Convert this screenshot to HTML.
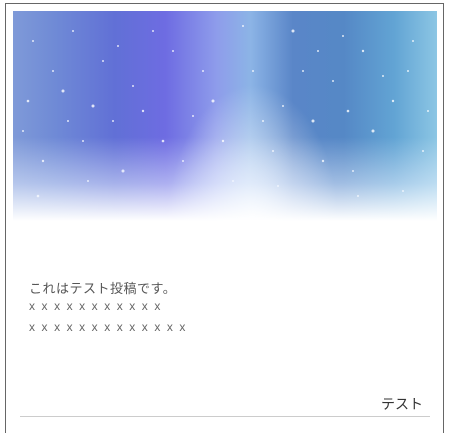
<!DOCTYPE html>
<html><head><meta charset="utf-8"><style>
body{margin:0;width:450px;height:426px;background:#fff;overflow:hidden;font-family:"Liberation Sans","Noto Sans CJK JP",sans-serif;position:relative}
.frame{position:absolute;left:5px;top:3px;width:439px;height:430px;border:1px solid #666;border-bottom:none;box-sizing:border-box}
.img{position:absolute;left:13px;top:11px;width:424px;height:210px;overflow:hidden;
background:linear-gradient(90deg,#7f9ad8 0%,#6f8ad6 10%,#6170d6 24%,#6e6ce2 36%,#8e9ceb 48%,#8cb4e6 56%,#5a86c8 66%,#5588c6 78%,#62a4d4 90%,#8cc6e4 100%)}
.fade{position:absolute;inset:0;background:linear-gradient(180deg,rgba(255,255,255,0) 0%,rgba(255,255,255,0) 60%,rgba(235,242,255,.5) 82%,#fff 100%)}
.glow{position:absolute;left:140px;top:50px;width:200px;height:200px;background:radial-gradient(ellipse at 50% 80%,rgba(255,255,255,.85),rgba(255,255,255,0) 60%)}
.t{position:absolute;left:29px;color:#555;font-size:13px;letter-spacing:.5px}
.x{font-size:12px;letter-spacing:1.6px;color:#666}
.sig{position:absolute;left:381px;top:394px;font-size:14px;color:#333}
.hr{position:absolute;left:20px;top:416px;width:410px;height:1px;background:#ccc}
</style></head><body>
<div class="frame"></div>
<div class="img">
<div class="glow"></div>
<svg width="424" height="210" style="position:absolute;left:0;top:0">
<g fill="#fff" opacity=".8">
<circle cx="20" cy="30" r="1"/><circle cx="50" cy="80" r="1.5"/><circle cx="90" cy="50" r="1"/><circle cx="130" cy="100" r="1.2"/><circle cx="160" cy="40" r="1"/><circle cx="200" cy="90" r="1.5"/><circle cx="240" cy="60" r="1"/><circle cx="280" cy="20" r="1.5"/><circle cx="320" cy="70" r="1"/><circle cx="360" cy="120" r="1.5"/><circle cx="400" cy="30" r="1"/><circle cx="30" cy="150" r="1.2"/><circle cx="70" cy="130" r="1"/><circle cx="110" cy="160" r="1.5"/><circle cx="170" cy="150" r="1"/><circle cx="210" cy="130" r="1.2"/><circle cx="260" cy="140" r="1"/><circle cx="300" cy="110" r="1.5"/><circle cx="340" cy="160" r="1"/><circle cx="380" cy="90" r="1.2"/><circle cx="410" cy="140" r="1"/><circle cx="60" cy="20" r="1"/><circle cx="140" cy="20" r="1"/><circle cx="230" cy="15" r="1"/><circle cx="350" cy="40" r="1.2"/><circle cx="100" cy="110" r="1"/><circle cx="190" cy="60" r="1"/><circle cx="310" cy="150" r="1.2"/><circle cx="15" cy="90" r="1.3"/><circle cx="390" cy="180" r="1"/><circle cx="25" cy="185" r="1.3"/><circle cx="120" cy="75" r="1"/><circle cx="270" cy="95" r="1"/><circle cx="330" cy="25" r="1"/><circle cx="80" cy="95" r="1.5"/><circle cx="370" cy="65" r="1"/>
<circle cx="40" cy="60" r="1"/><circle cx="75" cy="170" r="1"/><circle cx="150" cy="130" r="1.3"/><circle cx="220" cy="170" r="1"/><circle cx="250" cy="110" r="1"/><circle cx="290" cy="60" r="1"/><circle cx="335" cy="100" r="1.3"/><circle cx="395" cy="60" r="1"/><circle cx="415" cy="100" r="1"/><circle cx="55" cy="110" r="1"/><circle cx="180" cy="105" r="1"/><circle cx="265" cy="175" r="1"/><circle cx="345" cy="185" r="1"/><circle cx="10" cy="120" r="1"/><circle cx="105" cy="35" r="1"/><circle cx="305" cy="40" r="1"/>
</g></svg>
<div class="fade"></div>
</div>
<div class="t" style="top:278px">これはテスト投稿です。</div>
<div class="t x" style="top:299px">x x x x x x x x x x x</div>
<div class="t x" style="top:320px">x x x x x x x x x x x x x</div>
<div class="sig">テスト</div>
<div class="hr"></div>
</body></html>
